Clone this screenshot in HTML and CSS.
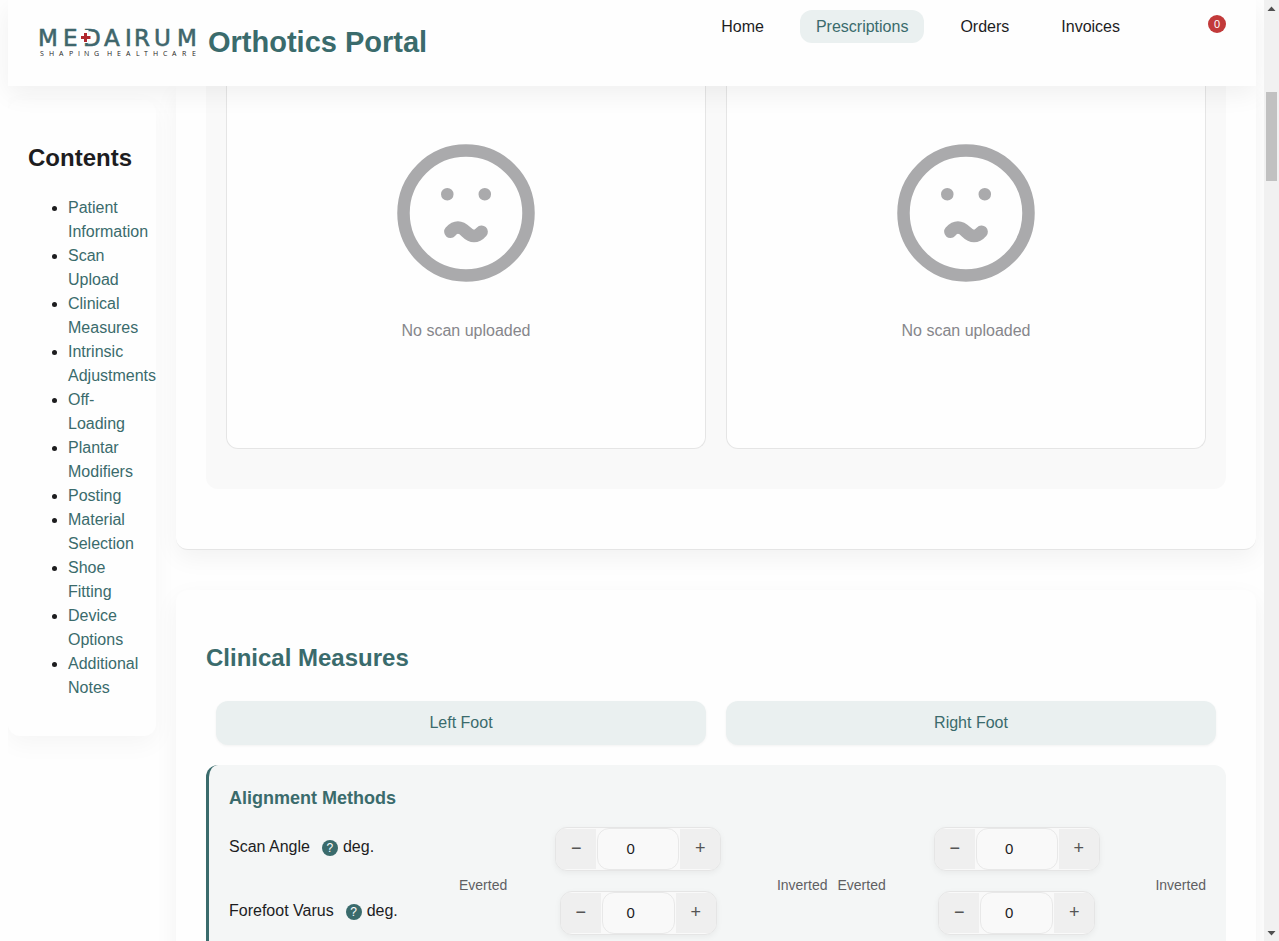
FILE: index.html
```html
<!DOCTYPE html>
<html lang="en">
<head>
<meta charset="utf-8">
<title>Orthotics Portal</title>
<link rel="stylesheet" href="styles.css">
</head>
<body>
<div class="window">
  <div class="page">
    <header class="header">
      <a class="brand" href="#">
        <svg class="logo" viewBox="0 0 158 30" role="img" aria-label="Medairum Shaping Healthcare">
          <text class="logo-name" y="19" x="-2 23 43 64 85 94 114 137">MEDAIRUM</text>
          <path d="M46 3v13M38 10.500h15" stroke="#fff" stroke-width="5"/>
          <path d="M45.500 6v9M41 10.500h9.500" stroke="#b0282e" stroke-width="3"/>
          <text class="logo-tag" y="29" x="0 9 19 29 38 44 54">SHAPING</text>
          <text class="logo-tag" y="29" x="67 77 86 96 104 113 123 132 142 152">HEALTHCARE</text>
        </svg>
        <span class="title">Orthotics Portal</span>
      </a>
      <nav class="nav">
        <a class="nav-link" href="#">Home</a>
        <a class="nav-link active" href="#">Prescriptions</a>
        <a class="nav-link" href="#">Orders</a>
        <a class="nav-link" href="#">Invoices</a>
        <span class="badge">0</span>
      </nav>
    </header>

    <div class="body">
      <div class="side-column">
        <aside class="sidebar">
          <h2 class="side-heading">Contents</h2>
          <ul class="toc">
            <li><a href="#">Patient Information</a></li>
            <li><a href="#">Scan Upload</a></li>
            <li><a href="#">Clinical Measures</a></li>
            <li><a href="#">Intrinsic Adjustments</a></li>
            <li><a href="#">Off-Loading</a></li>
            <li><a href="#">Plantar Modifiers</a></li>
            <li><a href="#">Posting</a></li>
            <li><a href="#">Material Selection</a></li>
            <li><a href="#">Shoe Fitting</a></li>
            <li><a href="#">Device Options</a></li>
            <li><a href="#">Additional Notes</a></li>
          </ul>
        </aside>
      </div>

      <main class="main">
        <section class="card card-scans">
          <div class="scans">
            <div class="scan">
              <svg class="face" viewBox="0 0 24 24" aria-hidden="true">
                <circle cx="12" cy="12" r="10"/>
                <path d="M9 9h.01M15 9h.01M9.500 15C10.300 14.100 11.100 14.100 12 15S13.700 15.900 14.500 15"/>
              </svg>
              <p class="scan-text">No scan uploaded</p>
            </div>
            <div class="scan">
              <svg class="face" viewBox="0 0 24 24" aria-hidden="true">
                <circle cx="12" cy="12" r="10"/>
                <path d="M9 9h.01M15 9h.01M9.500 15C10.300 14.100 11.100 14.100 12 15S13.700 15.900 14.500 15"/>
              </svg>
              <p class="scan-text">No scan uploaded</p>
            </div>
          </div>
        </section>

        <section class="card card-measures">
          <h2 class="heading">Clinical Measures</h2>
          <div class="tabs">
            <button class="tab" type="button">Left Foot</button>
            <button class="tab" type="button">Right Foot</button>
          </div>
          <div class="group">
            <h3 class="group-heading">Alignment Methods</h3>
            <div class="row">
              <div class="label"><span id="scan-angle">Scan Angle</span><button class="help" type="button" aria-label="About scan angle">?</button><span>deg.</span></div>
              <div class="stepper">
                <button class="step" type="button" aria-label="Decrease">−</button>
                <input class="value" type="number" value="0" aria-labelledby="scan-angle">
                <button class="step" type="button" aria-label="Increase">+</button>
              </div>
              <div class="stepper">
                <button class="step" type="button" aria-label="Decrease">−</button>
                <input class="value" type="number" value="0" aria-labelledby="scan-angle">
                <button class="step" type="button" aria-label="Increase">+</button>
              </div>
            </div>
            <div class="row row-scale">
              <span></span>
              <div class="scale"><span>Everted</span><span>Inverted</span></div>
              <div class="scale"><span>Everted</span><span>Inverted</span></div>
            </div>
            <div class="row">
              <div class="label"><span id="forefoot">Forefoot Varus</span><button class="help" type="button" aria-label="About forefoot varus">?</button><span>deg.</span></div>
              <div class="stepper">
                <button class="step" type="button" aria-label="Decrease">−</button>
                <input class="value narrow" type="number" value="0" aria-labelledby="forefoot">
                <button class="step" type="button" aria-label="Increase">+</button>
              </div>
              <div class="stepper">
                <button class="step" type="button" aria-label="Decrease">−</button>
                <input class="value narrow" type="number" value="0" aria-labelledby="forefoot">
                <button class="step" type="button" aria-label="Increase">+</button>
              </div>
            </div>
          </div>
        </section>
      </main>
    </div>
  </div>

  <div class="scrollbar" aria-hidden="true">
    <svg class="arrow" viewBox="0 0 15 17"><path d="M3.500 11 7.500 6.500 11.500 11z"/></svg>
    <div class="track"><div class="thumb"></div></div>
    <svg class="arrow" viewBox="0 0 15 17"><path d="M3.500 7 7.500 11.500 11.500 7z"/></svg>
  </div>
</div>
</body>
</html>
```
FILE: styles.css
```css
* { box-sizing: border-box; }

body {
  margin: 0;
  background: #fefefe;
  color: #1d1d1f;
  font: 16px/24px "Liberation Sans", Arial, sans-serif;
}

h2, h3, p, ul { margin: 0; }
a { color: #3a6b6c; text-decoration: none; }
button, input { font-family: inherit; }

.window { display: flex; height: 100vh; overflow: hidden; }
.page {
  flex: 1;
  min-width: 0;
  display: flex;
  flex-direction: column;
  padding: 0 8px;
  overflow: hidden;
}

/* Header */
.header {
  position: relative;
  z-index: 2;
  flex: none;
  display: flex;
  justify-content: space-between;
  align-items: stretch;
  height: 86px;
  padding: 0 30px 0 32px;
  background: #fefefe;
  box-shadow: 0 8px 24px rgba(0, 0, 0, 0.06);
}
.brand { display: flex; align-items: center; gap: 10px; padding-bottom: 2px; }
.logo { width: 158px; height: 30px; overflow: visible; }
.logo-name {
  font: 23px "DejaVu Sans", sans-serif;
  fill: #3f666c;
  stroke: #3f666c;
  stroke-width: 0.6;
}
.logo-tag { font: 7px "Open Sans", sans-serif; fill: #222; }
.title { font-size: 29px; font-weight: 700; }
.nav { display: flex; align-items: flex-start; gap: 20px; padding-top: 10px; }
.nav-link {
  padding: 0 16px;
  border-radius: 12px;
  line-height: 33px;
  color: #1d1d1f;
}
.nav-link.active { background: #eaf0f0; color: #3a6b6c; }
.badge {
  width: 18px;
  height: 18px;
  margin: 5px 0 0 52px;
  border-radius: 50%;
  background: #c23a3a;
  color: #fff;
  font-size: 11px;
  line-height: 18px;
  text-align: center;
}

/* Contents */
.body { flex: 1; min-height: 0; display: flex; }
.side-column { flex: none; padding: 14px 20px 0 0; overflow: hidden; }
.sidebar {
  width: 148px;
  padding: 40px 20px 36px;
  border-radius: 12px;
  background: #fefefe;
  box-shadow: 0 8px 24px rgba(0, 0, 0, 0.04);
}
.side-heading { margin-bottom: 20px; font-size: 24px; line-height: 36px; }
.toc { padding-left: 40px; }

/* Cards */
.main { flex: 1; min-width: 0; }
.card {
  padding: 50px 30px 60px;
  border-radius: 12px;
  background: #fefefe;
  box-shadow: 0 8px 24px rgba(0, 0, 0, 0.05);
}
.card-scans {
  margin-bottom: 40px;
  padding-top: 0;
  border-bottom: 1px solid #e5e5e5;
  border-radius: 0 0 12px 12px;
}
.scans {
  display: grid;
  grid-template-columns: 1fr 1fr;
  gap: 20px;
  padding: 0 20px 40px;
  border-radius: 0 0 12px 12px;
  background: #f9f9f9;
}
.scan {
  display: flex;
  flex-direction: column;
  align-items: center;
  gap: 31px;
  padding: 52px 20px 105px;
  border: 1px solid #e5e5e5;
  border-top: 0;
  border-radius: 0 0 12px 12px;
  background: #fefefe;
}
.face {
  width: 150px;
  height: 150px;
  fill: none;
  stroke: #aaaaac;
  stroke-width: 2;
  stroke-linecap: round;
  stroke-linejoin: round;
}
.scan-text { color: #86868b; }

.heading { margin-bottom: 25px; color: #3a6b6c; font-size: 24px; line-height: 36px; }
.tabs {
  display: grid;
  grid-template-columns: 1fr 1fr;
  gap: 20px;
  margin-bottom: 20px;
  padding: 0 10px;
}
.tab {
  height: 44px;
  padding: 0;
  border: 0;
  border-radius: 12px;
  background: #eaf0f0;
  color: #3a6b6c;
  font-size: 16px;
  box-shadow: 0 1px 3px rgba(0, 0, 0, 0.05);
}

/* Measures */
.group {
  padding: 20px;
  border-left: 3px solid #3a6b6c;
  border-radius: 12px;
  background: #f4f6f6;
}
.group-heading { margin-bottom: 15px; color: #3a6b6c; font-size: 18px; line-height: 27px; }
.row { display: grid; grid-template-columns: 220px 1fr 1fr; }
.label { display: flex; align-items: center; height: 40px; }
.help {
  width: 16px;
  height: 16px;
  margin: 2px 5px 0 12px;
  padding: 0;
  border: 0;
  border-radius: 50%;
  background: #3a6b6c;
  color: #fff;
  font-size: 12px;
  line-height: 16px;
}
.row-scale { padding-top: 8px; }
.scale {
  display: flex;
  justify-content: space-between;
  padding-left: 10px;
  color: #5f5f63;
  font-size: 14px;
  line-height: 12px;
}
.stepper {
  display: flex;
  justify-self: center;
  gap: 1px;
  height: 44px;
  border: 1px solid #e5e5e5;
  border-radius: 12px;
  background: #f9f9f9;
  overflow: hidden;
  box-shadow: 0 2px 6px rgba(0, 0, 0, 0.05);
}
.step {
  width: 40px;
  margin: 1px 0;
  padding: 0 0 2px;
  border: 0;
  background: #efefef;
  color: #555;
  font-size: 18px;
}
.value {
  width: 82px;
  padding: 0 0 2px;
  border: 1px solid #e8e8e8;
  border-radius: 12px;
  background: #f9f9f9;
  color: #1d1d1f;
  font-size: 15px;
  text-align: center;
}
.value.narrow { width: 73px; }

/* Scrollbar */
.scrollbar {
  flex: none;
  display: flex;
  flex-direction: column;
  width: 15px;
  background: #f1f1f1;
  position: relative;
  z-index: 3;
}
.arrow { flex: none; width: 15px; height: 17px; fill: #505050; }
.track { flex: 1; padding: 75px 2px 0; }
.thumb { height: 89px; background: #c1c1c1; }
```
